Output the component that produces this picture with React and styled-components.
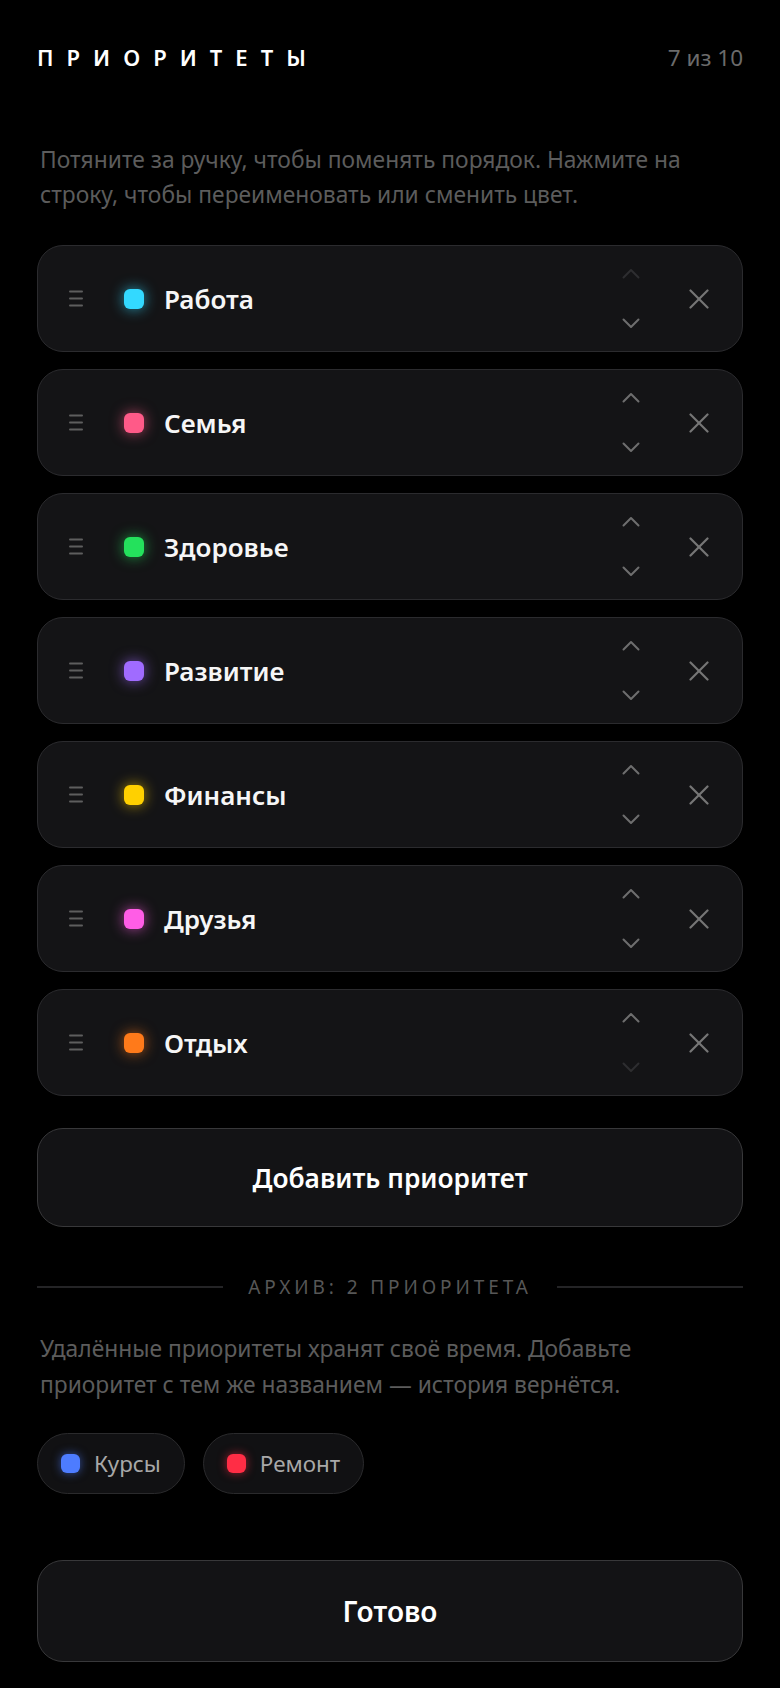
import React from "react";
import styled, { createGlobalStyle } from "styled-components";

const priorities = [
  { name: "Работа", color: "#33d9ff" },
  { name: "Семья", color: "#ff5a88" },
  { name: "Здоровье", color: "#24e15c" },
  { name: "Развитие", color: "#a06bff" },
  { name: "Финансы", color: "#ffd000" },
  { name: "Друзья", color: "#ff5de6" },
  { name: "Отдых", color: "#ff7a1a" }
];

const archived = [
  { name: "Курсы", color: "#4d7cff" },
  { name: "Ремонт", color: "#ff2d45" }
];

const GlobalStyle = createGlobalStyle`
  html, body {
    margin: 0;
    padding: 0;
    background: #000;
  }
  body {
    font-family: "Noto Sans", "Open Sans", sans-serif;
    -webkit-font-smoothing: antialiased;
  }
  * {
    box-sizing: border-box;
  }
`;

const HandleIcon = () => (
  <svg width="14" height="17" viewBox="0 0 14 17">
    <g stroke="currentColor" strokeWidth="2" strokeLinecap="round">
      <line x1="1" y1="1.5" x2="13" y2="1.5" />
      <line x1="1" y1="8.5" x2="13" y2="8.5" />
      <line x1="1" y1="15.5" x2="13" y2="15.5" />
    </g>
  </svg>
);

const Chevron = ({ down }) => (
  <svg width="18" height="11" viewBox="0 0 18 11">
    <polyline
      points={down ? "1.5,1.5 9,9 16.5,1.5" : "1.5,9.5 9,2 16.5,9.5"}
      fill="none"
      stroke="currentColor"
      strokeWidth="2"
      strokeLinecap="round"
      strokeLinejoin="round"
    />
  </svg>
);

const CloseIcon = () => (
  <svg width="20" height="20" viewBox="0 0 20 20">
    <g stroke="currentColor" strokeWidth="2.2" strokeLinecap="round">
      <line x1="1.5" y1="1.5" x2="18.5" y2="18.5" />
      <line x1="18.5" y1="1.5" x2="1.5" y2="18.5" />
    </g>
  </svg>
);

export default function App() {
  return (
    <>
      <GlobalStyle />
      <Page>
        <Header>
          <Title>Приоритеты</Title>
          <Count>7 из 10</Count>
        </Header>
        <Hint>
          Потяните за ручку, чтобы поменять порядок. Нажмите на строку, чтобы
          переименовать или сменить цвет.
        </Hint>
        <List>
          {priorities.map((p, i) => (
            <Row key={p.name}>
              <Handle>
                <HandleIcon />
              </Handle>
              <Dot color={p.color} />
              <Name>{p.name}</Name>
              <Movers>
                <MoveButton disabled={i === 0}>
                  <Chevron />
                </MoveButton>
                <MoveButton disabled={i === priorities.length - 1}>
                  <Chevron down />
                </MoveButton>
              </Movers>
              <RemoveButton>
                <CloseIcon />
              </RemoveButton>
            </Row>
          ))}
        </List>
        <AddButton>Добавить приоритет</AddButton>
        <Divider>
          <Rule />
          <DividerLabel>Архив: 2 приоритета</DividerLabel>
          <Rule />
        </Divider>
        <ArchiveHint>
          Удалённые приоритеты хранят своё время. Добавьте приоритет с тем же
          названием — история вернётся.
        </ArchiveHint>
        <Chips>
          {archived.map(a => (
            <Chip key={a.name}>
              <ChipDot color={a.color} />
              {a.name}
            </Chip>
          ))}
        </Chips>
        <DoneButton>Готово</DoneButton>
      </Page>
    </>
  );
}

const Page = styled.div`
  width: 780px;
  min-height: 1688px;
  padding: 43px 37px 25px;
  display: flex;
  flex-direction: column;
  background: #000;
`;

const Header = styled.div`
  display: flex;
  justify-content: space-between;
  align-items: baseline;
  height: 28px;
`;

const Title = styled.h1`
  margin: 0;
  font-size: 22px;
  line-height: 28px;
  font-weight: 600;
  letter-spacing: 13px;
  text-transform: uppercase;
  color: #fff;
`;

const Count = styled.span`
  font-size: 22.5px;
  line-height: 28px;
  color: #6b6b6b;
`;

const Hint = styled.p`
  margin: 71px 0 0;
  padding: 0 3px;
  font-size: 22.8px;
  line-height: 35px;
  color: #5c5c5c;
`;

const List = styled.div`
  margin-top: 33px;
  display: flex;
  flex-direction: column;
  gap: 17px;
`;

const Row = styled.div`
  height: 107px;
  display: flex;
  align-items: center;
  padding: 0 23px 0 31px;
  background: #141416;
  border: 1.5px solid #2b2b2e;
  border-radius: 26px;
`;

const Handle = styled.span`
  display: flex;
  width: 14px;
  color: #5e5e5e;
`;

const Dot = styled.span`
  width: 20px;
  height: 20px;
  margin-left: 41px;
  border-radius: 6px;
  background: ${p => p.color};
  box-shadow: 0 0 14px ${p => p.color}aa;
`;

const Name = styled.span`
  flex: 1;
  margin-left: 20px;
  font-size: 26px;
  font-weight: 600;
  color: #f6f6f6;
`;

const Movers = styled.div`
  display: flex;
  flex-direction: column;
  width: 40px;
`;

const MoveButton = styled.button`
  height: 50px;
  padding: 0;
  border: none;
  background: none;
  display: flex;
  align-items: center;
  justify-content: center;
  color: ${p => (p.disabled ? "#2e2e30" : "#6e6e6e")};
`;

const RemoveButton = styled.button`
  width: 40px;
  height: 40px;
  margin-left: 28px;
  padding: 0;
  border: none;
  background: none;
  display: flex;
  align-items: center;
  justify-content: center;
  color: #767676;
`;

const BigButton = styled.button`
  width: 100%;
  border-radius: 26px;
  background: #131315;
  border: 1.5px solid #38383a;
  font-family: inherit;
  font-weight: 600;
  color: #fff;
`;

const AddButton = styled(BigButton)`
  margin-top: 32px;
  height: 99px;
  font-size: 26.3px;
`;

const DoneButton = styled(BigButton)`
  margin-top: 66px;
  height: 102px;
  font-size: 28px;
`;

const Divider = styled.div`
  margin-top: 48px;
  height: 24px;
  display: flex;
  align-items: center;
  gap: 25px;
`;

const Rule = styled.span`
  flex: 1;
  height: 2px;
  background: #242426;
`;

const DividerLabel = styled.span`
  font-size: 19px;
  line-height: 24px;
  letter-spacing: 3.9px;
  text-transform: uppercase;
  color: #575757;
`;

const ArchiveHint = styled.p`
  margin: 32px 0 0;
  padding: 0 3px;
  font-size: 22.8px;
  line-height: 36px;
  color: #5c5c5c;
`;

const Chips = styled.div`
  margin-top: 30px;
  display: flex;
  gap: 18px;
`;

const Chip = styled.div`
  height: 61px;
  display: flex;
  align-items: center;
  gap: 14px;
  padding: 0 23px;
  background: #111113;
  border: 1.5px solid #2a2a2c;
  border-radius: 31px;
  font-size: 22.4px;
  color: #a8a8a8;
`;

const ChipDot = styled.span`
  width: 19px;
  height: 19px;
  border-radius: 6px;
  background: ${p => p.color};
  box-shadow: 0 0 10px ${p => p.color}99;
`;
